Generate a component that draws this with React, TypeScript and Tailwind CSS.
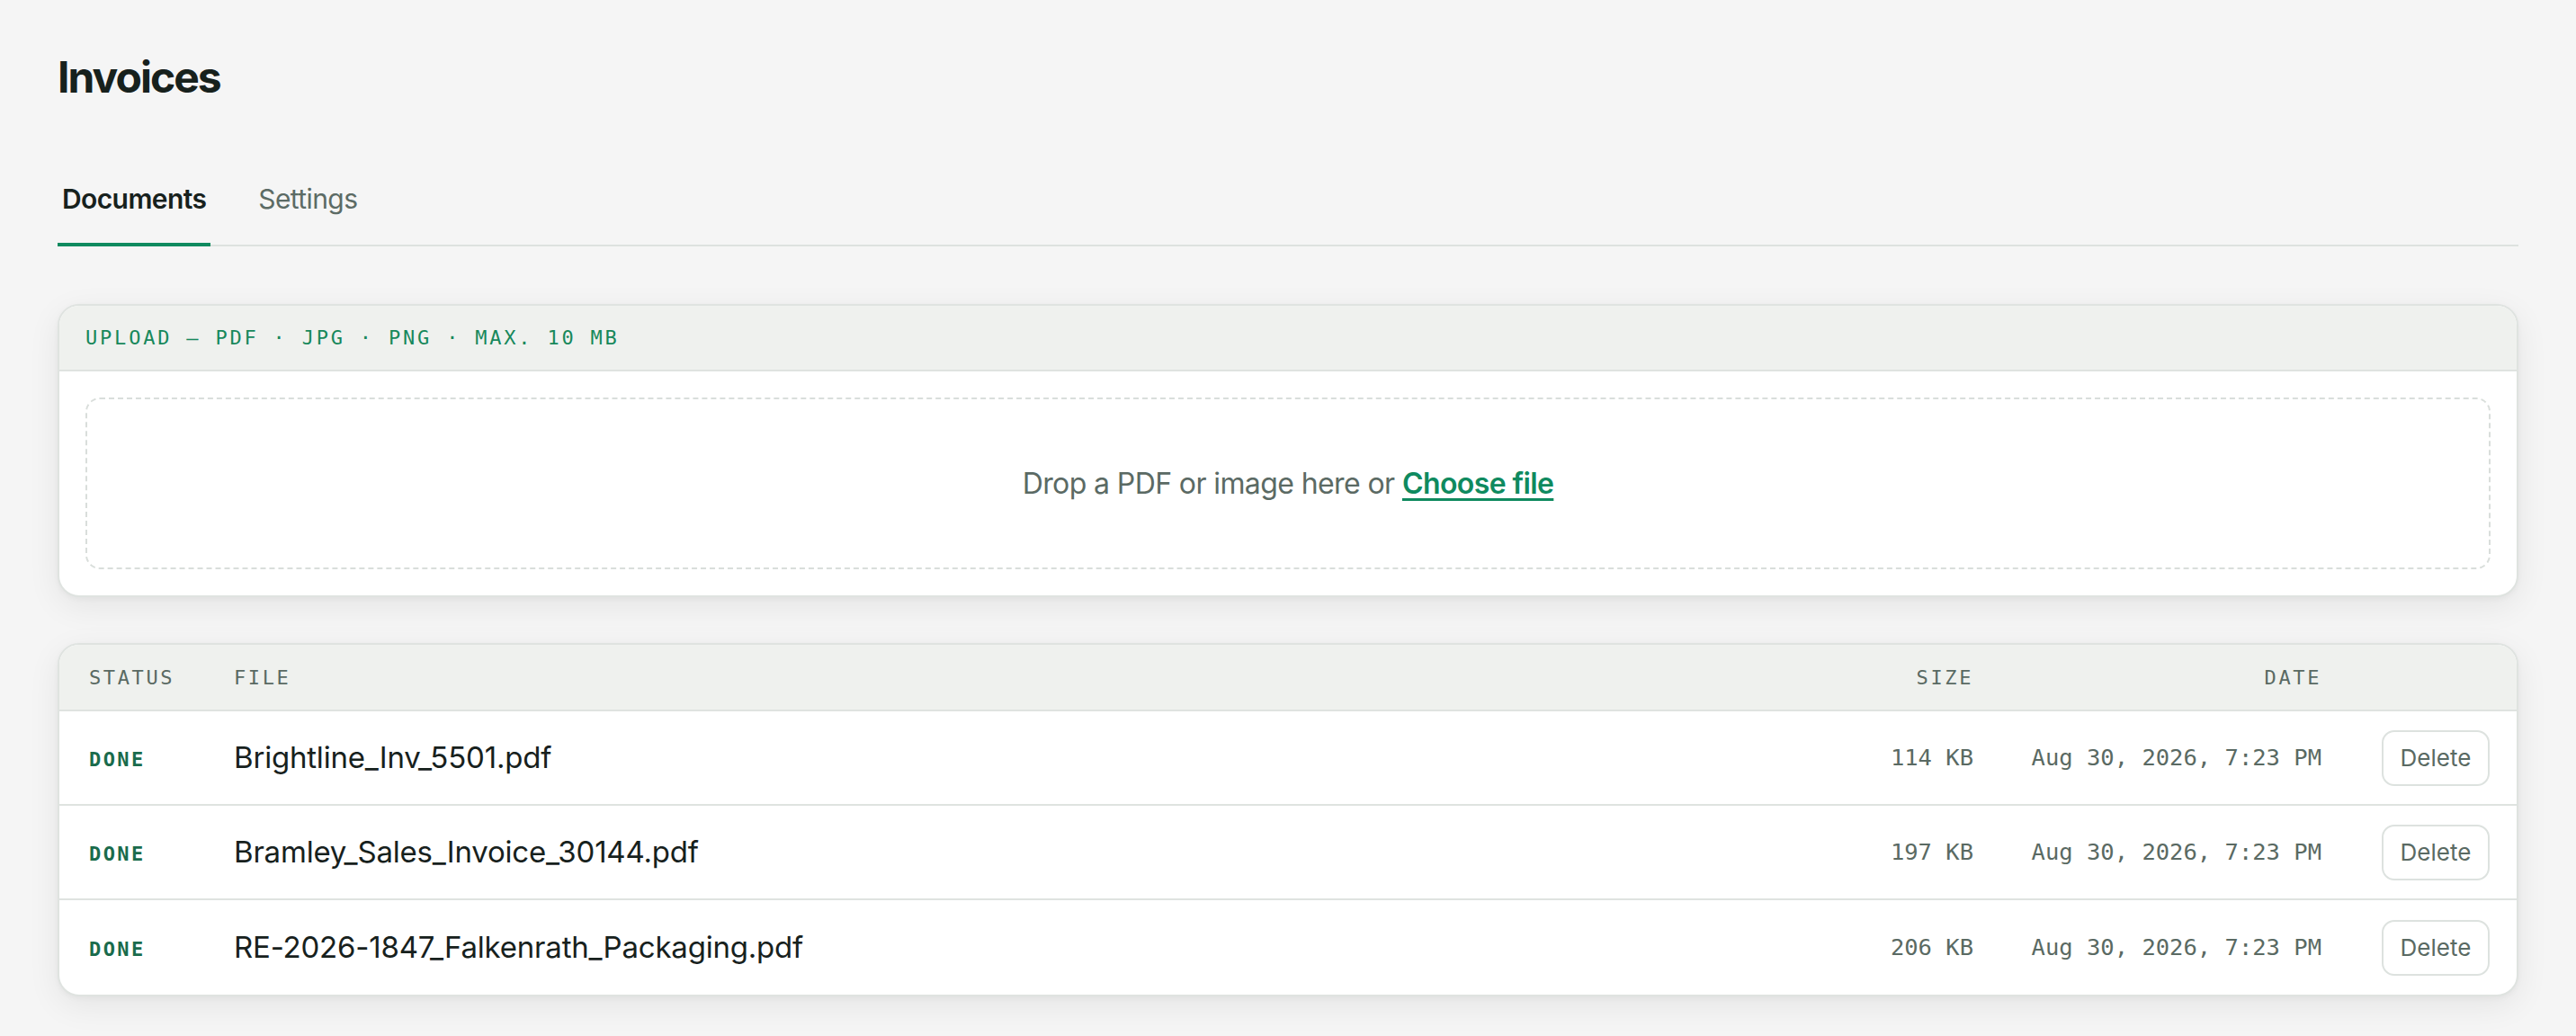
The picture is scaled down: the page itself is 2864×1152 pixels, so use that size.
import React from "react";

type Doc = { name: string; size: string; date: string };

const docs: Doc[] = [
  { name: "Brightline_Inv_5501.pdf", size: "114 KB", date: "Aug 30, 2026, 7:23 PM" },
  { name: "Bramley_Sales_Invoice_30144.pdf", size: "197 KB", date: "Aug 30, 2026, 7:23 PM" },
  { name: "RE-2026-1847_Falkenrath_Packaging.pdf", size: "206 KB", date: "Aug 30, 2026, 7:23 PM" },
];

const mono = "font-['DejaVu_Sans_Mono','Liberation_Mono',monospace]";

export default function App() {
  return (
    <div className="min-h-[1152px] bg-[#f5f5f5] px-[64px] pt-[62px] pb-[40px] font-['Inter','Roboto',sans-serif] text-[#17211d]">
      <h1 className="text-[48px] leading-[48px] font-bold tracking-[-2px]">Invoices</h1>

      {/* Tabs */}
      <nav className="mt-[91px] flex gap-[48px] border-b-2 border-[#dde2df]">
        <button className="-mb-[2px] border-b-4 border-[#0f8a5f] px-[5px] pb-[29px] text-[30px] leading-[40px] font-semibold tracking-[-0.6px] text-[#17211d]">
          Documents
        </button>
        <button className="-mb-[2px] border-b-4 border-transparent px-[5px] pb-[29px] text-[30px] leading-[40px] font-normal tracking-[-0.6px] text-[#5c6b65]">
          Settings
        </button>
      </nav>

      {/* Upload card */}
      <section className="mt-[64px] overflow-hidden rounded-[24px] border-2 border-[#dfe3e0] bg-white shadow-[0_10px_36px_rgba(0,0,0,0.07),0_2px_6px_rgba(0,0,0,0.04)]">
        <div className="flex h-[73px] items-center border-b-2 border-[#dfe3e0] bg-[#eff1ee] px-[29px]">
          <span className={`${mono} text-[22px] leading-none tracking-[2.8px] text-[#17885b]`}>
            UPLOAD — PDF · JPG · PNG · MAX. 10 MB
          </span>
        </div>
        <div className="p-[29px]">
          <div className="flex h-[191px] items-center justify-center rounded-[16px] border-2 border-dashed border-[#d9dedb] text-[32px] tracking-[-0.6px] text-[#5b6a64]">
            <span>
              Drop a PDF or image here or{" "}
              <a className="font-semibold text-[#0f8a5f] underline decoration-[3px] underline-offset-[5px]" href="#">
                Choose file
              </a>
            </span>
          </div>
        </div>
      </section>

      {/* Documents table */}
      <section className="mt-[51px] overflow-hidden rounded-[24px] border-2 border-[#dfe3e0] bg-white shadow-[0_10px_36px_rgba(0,0,0,0.07),0_2px_6px_rgba(0,0,0,0.04)]">
        <div className={`${mono} flex h-[74px] items-center border-b-2 border-[#dfe3e0] bg-[#eff1ee] pl-[33px] pr-[30px] text-[22px] tracking-[2.6px] text-[#5a6a63]`}>
          <div className="w-[161px]">STATUS</div>
          <div className="flex-1">FILE</div>
          <div className="w-[200px] text-right">SIZE</div>
          <div className="w-[387px] text-right">DATE</div>
          <div className="ml-[67px] w-[120px]" />
        </div>
        {docs.map((d, i) => (
          <div
            key={d.name}
            className={`flex h-[105px] items-center pl-[33px] pr-[30px] ${i < docs.length - 1 ? "border-b-2 border-[#dfe3e0]" : ""}`}
          >
            <div className={`${mono} w-[161px] pt-[4px] text-[22px] font-semibold tracking-[2.4px] text-[#1a6b4c]`}>DONE</div>
            <div className="flex-1 text-[33px] tracking-[-0.2px] text-[#17211d]">{d.name}</div>
            <div className={`${mono} w-[200px] text-right text-[25.5px] text-[#5a6a63]`}>{d.size}</div>
            <div className={`${mono} w-[387px] text-right text-[25.5px] text-[#5a6a63]`}>{d.date}</div>
            <div className="ml-[67px] w-[120px]">
              <button className="h-[62px] w-[120px] rounded-[14px] border-2 border-[#dde2df] bg-white text-[26px] text-[#5a6a63]">
                Delete
              </button>
            </div>
          </div>
        ))}
      </section>
    </div>
  );
}
